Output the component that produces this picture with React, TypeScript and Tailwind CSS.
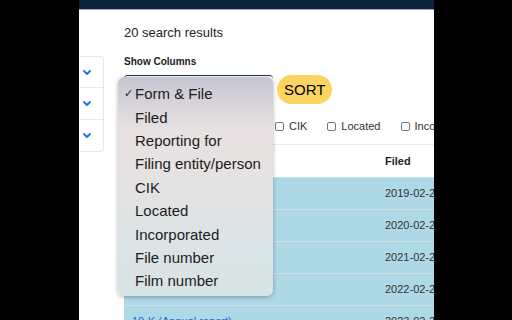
import React from 'react';

const columns = ['Form & File', 'Filed', 'Reporting for', 'Filing entity/person', 'CIK', 'Located', 'Incorporated', 'File number', 'Film number'];

const rows = [
  { form: '10-K (Annual report)', filed: '2019-02-26' },
  { form: '10-K (Annual report)', filed: '2020-02-25' },
  { form: '10-K (Annual report)', filed: '2021-02-24' },
  { form: '10-K (Annual report)', filed: '2022-02-23' },
  { form: '10-K (Annual report)', filed: '2023-02-22' },
];

const Chevron = () => (
  <svg width="8" height="5" viewBox="0 0 8 5" fill="none">
    <path d="M1 1l3 3 3-3" stroke="#1a73e8" strokeWidth="1.8" strokeLinecap="round" strokeLinejoin="round" />
  </svg>
);

export default function App() {
  return (
    <div className="flex h-[320px] w-[512px] overflow-hidden bg-black font-['Liberation_Sans',Arial,sans-serif] text-[#222]">
      <div className="w-[79px] shrink-0" />
      <div className="relative flex w-[355px] shrink-0 flex-col overflow-hidden bg-white">
        <div className="h-[10px] shrink-0 border-b border-[#9ea3ab] bg-[#0c213c]" />
        <div className="flex flex-1">
          {/* sidebar filters */}
          <div className="mt-[46px] w-[25px] shrink-0 self-start">
            {[0, 1, 2].map((i) => (
              <div key={i} className="flex h-[32px] items-center border-b border-r border-[#e6e8eb] pl-[4px] first:border-t first:rounded-tr-[3px] last:rounded-br-[3px]">
                <Chevron />
              </div>
            ))}
          </div>

          <div className="relative ml-[20px] w-[310px] shrink-0">
            <div className="mt-[15px] text-[13px] leading-[16px]">20 search results</div>
            <div className="mt-[15px] text-[10px] font-bold leading-[12px]">Show Columns</div>

            <div className="mt-[7px] flex items-center gap-[4px]">
              <div className="h-[29px] w-[149px] rounded-[4px] border-t border-[#1e3450]" />
              <button className="h-[29px] rounded-full bg-[#fcd462] px-[7px] text-[15px] leading-[29px] text-black">SORT</button>
            </div>

            <div className="mt-[16px] flex h-[12px] items-center whitespace-nowrap pl-[151px] text-[11px] text-[#333]">
              {['CIK', 'Located', 'Incorporated'].map((c) => (
                <label key={c} className="mr-[20px] flex items-center gap-[5px]">
                  <span className="h-[9px] w-[9px] rounded-[2px] border border-[#777] bg-white" />
                  {c}
                </label>
              ))}
            </div>

            <div className="mt-[12px] w-[330px] border-t border-[#e8eaed]">
              <div className="grid h-[32px] grid-cols-[253px_auto] items-center pl-[8px] text-[11px] font-bold">
                <span>Form &amp; File</span>
                <span>Filed</span>
              </div>
              {rows.map((r) => (
                <div key={r.filed} className="grid h-[32px] grid-cols-[253px_auto] items-center border-t border-[#cde0e7] bg-[#add8e6] pl-[8px] text-[11px] text-[#333]">
                  <span className="text-[#1a66d6]">{r.form}</span>
                  <span>{r.filed}</span>
                </div>
              ))}
            </div>

            {/* open column menu */}
            <div className="absolute left-[-6px] top-[67px] w-[155px] rounded-[6px] bg-[linear-gradient(180deg,#c6c6d3_0%,#e8e1e2_25%,#e6e2e2_45%,#dbe4e6_75%,#d8e3e4_100%)] pb-[3px] pt-[5px] shadow-[0_1px_4px_rgba(0,0,0,0.3)]">
              {columns.map((c, i) => (
                <div key={c} className="relative flex h-[23.4px] items-center pl-[17px] text-[15px] leading-none text-[#1c1c1c]">
                  {i === 0 && <span className="absolute left-[6px] top-[6px] text-[11px]">✓</span>}
                  {c}
                </div>
              ))}
            </div>
          </div>
        </div>
      </div>
      <div className="flex-1" />
    </div>
  );
}
